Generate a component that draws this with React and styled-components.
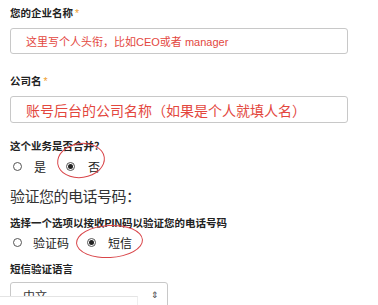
import React from 'react';
import styled, { createGlobalStyle } from 'styled-components';

const Global = createGlobalStyle`
  html, body { margin: 0; padding: 0; background: #fff; }
  body {
    font-family: "Liberation Sans", "Noto Sans CJK SC", sans-serif;
    color: #222;
    overflow: hidden;
  }
`;

const Page = styled.div`
  position: relative;
  width: 378px;
  height: 305px;
  overflow: hidden;
  padding: 6px 0 0 10px;
  box-sizing: border-box;
`;

const Label = styled.div`
  font-size: 10.5px;
  font-weight: bold;
  line-height: 14px;
  color: #222;
  margin-top: ${(p) => p.$top || 0}px;
`;

const Star = styled.span`
  color: #f0a030;
  margin-left: 2px;
  font-weight: normal;
`;

const Input = styled.div`
  width: 338px;
  height: ${(p) => p.$h}px;
  margin-top: ${(p) => p.$top}px;
  border: 1px solid #c8c8c8;
  border-radius: 3px;
  box-sizing: border-box;
  display: flex;
  align-items: center;
  padding-left: 15px;
  color: #e3473e;
  font-size: ${(p) => p.$size}px;
  white-space: nowrap;
`;

const Heading = styled.div`
  margin-top: ${(p) => p.$top}px;
  font-size: 15px;
  letter-spacing: -0.5px;
  line-height: 20px;
  color: #333;
`;

const RadioRow = styled.div`
  position: relative;
  display: flex;
  align-items: center;
  height: 20px;
  margin-top: ${(p) => p.$top}px;
  padding-left: 3px;
  font-size: 12px;
  color: #222;
`;

const Option = styled.div`
  display: flex;
  align-items: center;
  gap: ${(p) => p.$gap}px;
  margin-right: ${(p) => p.$mr}px;
`;

const Dot = styled.span`
  width: 9px;
  height: 9px;
  border: 1px solid #555;
  border-radius: 50%;
  box-sizing: border-box;
  display: flex;
  align-items: center;
  justify-content: center;
  &::after {
    content: '';
    display: ${(p) => (p.$on ? 'block' : 'none')};
    width: 5px;
    height: 5px;
    border-radius: 50%;
    background: #222;
  }
`;

const Ellipse = styled.div`
  position: absolute;
  left: ${(p) => p.$l}px;
  top: ${(p) => p.$t}px;
  width: ${(p) => p.$w}px;
  height: ${(p) => p.$h}px;
  border: 1px solid #d9464a;
  border-radius: 50%;
  transform: rotate(${(p) => p.$r || 0}deg);
  pointer-events: none;
`;

const Select = styled.div`
  width: 158px;
  height: 26px;
  margin-top: 6px;
  border: 1px solid #c8c8c8;
  border-radius: 3px;
  box-sizing: border-box;
  display: flex;
  align-items: center;
  justify-content: space-between;
  padding: 0 8px 0 12px;
  font-size: 12px;
  color: #333;
`;

const Arrows = styled.span`
  font-size: 9px;
  color: #444;
  line-height: 1;
`;

const Cover = styled.div`
  position: absolute;
  left: 0;
  bottom: 0;
  width: 137px;
  height: 8px;
  background: #fff;
  border-top: 1px solid #e4e4e4;
  border-right: 1px solid #eee;
`;

export default function App() {
  return (
    <>
      <Global />
      <Page>
        <Label>
          您的企业名称<Star>*</Star>
        </Label>
        <Input $h={26} $top={8} $size={11}>
          这里写个人头衔，比如CEO或者 manager
        </Input>
        <Label $top={20}>
          公司名<Star>*</Star>
        </Label>
        <Input $h={27} $top={8} $size={14}>
          账号后台的公司名称（如果是个人就填人名）
        </Input>
        <Label $top={16}>这个业务是否合并？</Label>
        <RadioRow $top={3}>
          <Option $gap={12} $mr={20}>
            <Dot />
            是
          </Option>
          <Option $gap={13} $mr={0}>
            <Dot $on />
            否
          </Option>
          <Ellipse $l={47} $t={-13} $w={46} $h={33} $r={-8} />
        </RadioRow>
        <Heading $top={11}>验证您的电话号码：</Heading>
        <Label $top={9}>选择一个选项以接收PIN码以验证您的电话号码</Label>
        <RadioRow $top={2}>
          <Option $gap={11} $mr={18}>
            <Dot />
            验证码
          </Option>
          <Option $gap={12} $mr={0}>
            <Dot $on />
            短信
          </Option>
          <Ellipse $l={66} $t={-7} $w={65} $h={31} $r={-3} />
        </RadioRow>
        <Label $top={10}>短信验证语言</Label>
        <Select>
          <span>中文</span>
          <Arrows>⇕</Arrows>
        </Select>
        <Cover />
      </Page>
    </>
  );
}
